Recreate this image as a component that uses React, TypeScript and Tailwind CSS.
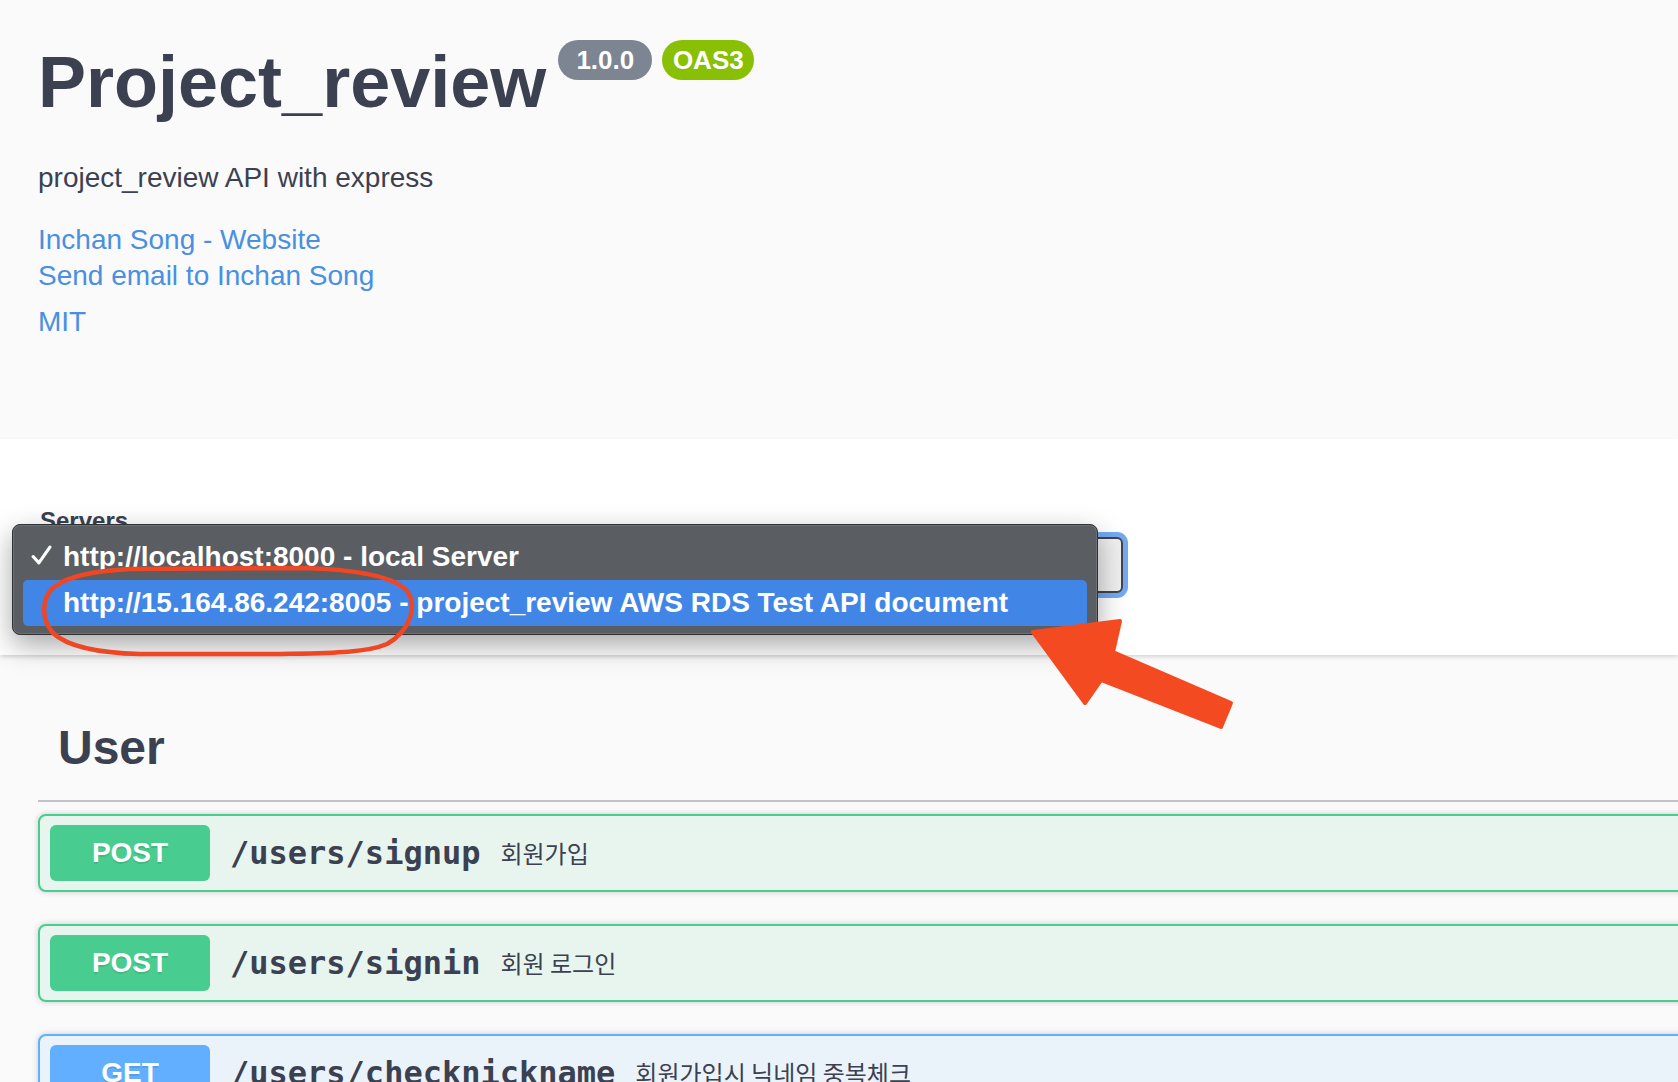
import React from "react";

function Badge({ method, color }: { method: string; color: string }) {
  return (
    <div
      className={`w-[160px] h-[56px] rounded-[6px] flex items-center justify-center text-white text-[28px] font-bold [text-shadow:0_2px_0_rgba(0,0,0,0.1)] ${color}`}
    >
      {method}
    </div>
  );
}

function Row({
  method,
  path,
  desc,
  kind,
}: {
  method: string;
  path: string;
  desc: string;
  kind: "post" | "get";
}) {
  const rowCls =
    kind === "post"
      ? "border-[#49cc90] bg-[#e8f5ef]"
      : "border-[#61affe] bg-[#ebf3fa]";
  const badgeCls = kind === "post" ? "bg-[#49cc90]" : "bg-[#61affe]";
  return (
    <div
      className={`h-[78px] shrink-0 w-[1700px] border-2 rounded-[8px] flex items-center px-[10px] shadow-[0_0_6px_rgba(0,0,0,0.19)] ${rowCls}`}
    >
      <Badge method={method} color={badgeCls} />
      <span className="px-[20px] font-['DejaVu_Sans_Mono',monospace] font-bold text-[32px] text-[#3b4151] leading-[40px]">
        {path}
      </span>
      <span className="font-['Noto_Sans_CJK_KR',sans-serif] text-[24px] text-[#3b4151]">
        {desc}
      </span>
    </div>
  );
}

export default function App() {
  return (
    <div className="relative w-[1678px] h-[1082px] overflow-hidden bg-[#fafafa] font-['Liberation_Sans',Arial,sans-serif] text-[#3b4151]">
      {/* Info section */}
      <div className="h-[439px] pl-[38px] pt-[40px]">
        <div className="flex items-start">
          <h1 className="mt-[6px] text-[72px] leading-[72px] font-bold text-[#3b4151]">
            Project_review
          </h1>
          <div className="ml-[12px] flex gap-[10px]">
            <span className="h-[40px] w-[94px] rounded-full bg-[#7d8492] text-white text-[26px] font-bold flex items-center justify-center">
              1.0.0
            </span>
            <span className="h-[40px] w-[92px] rounded-full bg-[#89bf04] text-white text-[26px] font-bold flex items-center justify-center">
              OAS3
            </span>
          </div>
        </div>
        <p className="mt-[42px] text-[28px] leading-[36px] text-[#3b4151]">
          project_review API with express
        </p>
        <div className="mt-[26px] text-[28px] leading-[36px] text-[#4990e2]">
          <div>Inchan Song - Website</div>
          <div>Send email to Inchan Song</div>
          <div className="mt-[10px]">MIT</div>
        </div>
      </div>

      {/* Servers section */}
      <div className="relative z-10 h-[216px] bg-white shadow-[0_2px_4px_rgba(0,0,0,0.15)] pl-[40px] pt-[68px]">
        <div className="text-[24px] leading-[28px] font-bold text-[#3b4151]">Servers</div>
        <div className="mt-[2px] w-[1083px] h-[56px] border-2 border-[#41444e] rounded-[6px] bg-[#efefef] shadow-[0_0_0_5px_#74a9f1] flex items-center pl-[20px] text-[28px] font-bold text-[#3b4151]">
          http://localhost:8000 - local Server
        </div>
      </div>

      {/* Operations */}
      <div className="pl-[38px] mt-[69px]">
        <div className="w-[1700px] px-[20px] pb-[28px] border-b-2 border-[#c1c3c7] text-[48px] leading-[48px] font-bold text-[#3b4151]">
          User
        </div>
        <div className="mt-[12px] flex flex-col gap-[32px]">
          <Row method="POST" path="/users/signup" desc="회원가입" kind="post" />
          <Row method="POST" path="/users/signin" desc="회원 로그인" kind="post" />
          <Row
            method="GET"
            path="/users/checknickname"
            desc="회원가입시 닉네임 중복체크"
            kind="get"
          />
        </div>
      </div>

      {/* Native dropdown menu overlay */}
      <div className="absolute left-[12px] top-[524px] z-20 w-[1086px] h-[111px] rounded-[8px] border border-[#2f3034] bg-[#5a5d62] shadow-[0_10px_28px_rgba(0,0,0,0.35),inset_0_0_0_1px_rgba(255,255,255,0.12)] pt-[9px] px-[10px] text-white text-[28px] font-bold">
        <div className="relative h-[46px] pl-[40px] flex items-center leading-[32px]">
          <svg
            className="absolute left-[8px] top-[11px]"
            width="21"
            height="21"
            viewBox="0 0 20 20"
          >
            <path
              d="M2 11 L7.5 17 L18 2"
              fill="none"
              stroke="#ffffff"
              strokeWidth="3"
              strokeLinecap="round"
              strokeLinejoin="round"
            />
          </svg>
          http://localhost:8000 - local Server
        </div>
        <div className="h-[46px] pl-[40px] flex items-center leading-[32px] rounded-[5px] bg-[#4186e7]">
          http://15.164.86.242:8005 - project_review AWS RDS Test API document
        </div>
      </div>

      {/* Annotations */}
      <svg
        className="absolute left-0 top-0 z-30 pointer-events-none"
        width="1678"
        height="1082"
        viewBox="0 0 1678 1082"
      >
        <path
          d="M 300 568 C 345 569 392 574 407 591 C 418 606 410 631 387 644 C 366 653 330 653 280 654 L 140 654 C 100 653 68 647 53 633 C 40 618 42 597 54 587 C 68 576 92 571 130 569 L 300 568"
          fill="none"
          stroke="#ef4624"
          strokeWidth="4.5"
          strokeLinecap="round"
          strokeLinejoin="round"
        />
        <polygon
          points="1033,632 1120,621 1113,652 1231,703 1221,727 1101,680 1085,703"
          fill="#f44a22"
          stroke="#f44a22"
          strokeWidth="4"
          strokeLinejoin="round"
        />
      </svg>
    </div>
  );
}
